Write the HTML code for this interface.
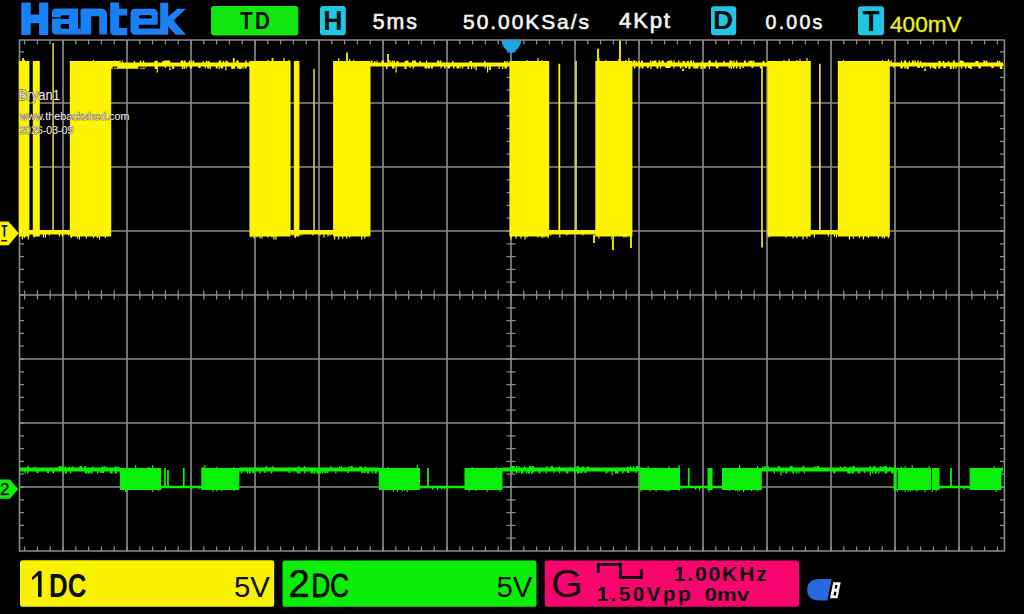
<!DOCTYPE html>
<html><head><meta charset="utf-8"><title>Hantek</title>
<style>
html,body{margin:0;padding:0;background:#000;width:1024px;height:614px;overflow:hidden}
svg{position:absolute;left:0;top:0;display:block}
text{font-family:"Liberation Sans",sans-serif}
</style></head><body>
<svg width="1024" height="614" viewBox="0 0 1024 614">
<rect width="1024" height="614" fill="#000"/>
<g fill="none" stroke="#8c8c8c" stroke-width="1.6">
<path d="M63 40V551 M127 40V551 M191 40V551 M255 40V551 M319 40V551 M383 40V551 M447 40V551 M511 40V551 M575 40V551 M639 40V551 M703 40V551 M767 40V551 M831 40V551 M895 40V551 M959 40V551 M19.5 103H1004.4 M19.5 167H1004.4 M19.5 231H1004.4 M19.5 295H1004.4 M19.5 359H1004.4 M19.5 423H1004.4 M19.5 487H1004.4"/>
<path d="M19.5 40H1004.4V551H19.5Z"/>
<path d="M24.6 40v4.5M24.6 551v-4.5M24.6 290.5v9 M37.4 40v4.5M37.4 551v-4.5M37.4 290.5v9 M50.2 40v4.5M50.2 551v-4.5M50.2 290.5v9 M63 40v4.5M63 551v-4.5M63 290.5v9 M75.8 40v4.5M75.8 551v-4.5M75.8 290.5v9 M88.6 40v4.5M88.6 551v-4.5M88.6 290.5v9 M101.4 40v4.5M101.4 551v-4.5M101.4 290.5v9 M114.2 40v4.5M114.2 551v-4.5M114.2 290.5v9 M127 40v4.5M127 551v-4.5M127 290.5v9 M139.8 40v4.5M139.8 551v-4.5M139.8 290.5v9 M152.6 40v4.5M152.6 551v-4.5M152.6 290.5v9 M165.4 40v4.5M165.4 551v-4.5M165.4 290.5v9 M178.2 40v4.5M178.2 551v-4.5M178.2 290.5v9 M191 40v4.5M191 551v-4.5M191 290.5v9 M203.8 40v4.5M203.8 551v-4.5M203.8 290.5v9 M216.6 40v4.5M216.6 551v-4.5M216.6 290.5v9 M229.4 40v4.5M229.4 551v-4.5M229.4 290.5v9 M242.2 40v4.5M242.2 551v-4.5M242.2 290.5v9 M255 40v4.5M255 551v-4.5M255 290.5v9 M267.8 40v4.5M267.8 551v-4.5M267.8 290.5v9 M280.6 40v4.5M280.6 551v-4.5M280.6 290.5v9 M293.4 40v4.5M293.4 551v-4.5M293.4 290.5v9 M306.2 40v4.5M306.2 551v-4.5M306.2 290.5v9 M319 40v4.5M319 551v-4.5M319 290.5v9 M331.8 40v4.5M331.8 551v-4.5M331.8 290.5v9 M344.6 40v4.5M344.6 551v-4.5M344.6 290.5v9 M357.4 40v4.5M357.4 551v-4.5M357.4 290.5v9 M370.2 40v4.5M370.2 551v-4.5M370.2 290.5v9 M383 40v4.5M383 551v-4.5M383 290.5v9 M395.8 40v4.5M395.8 551v-4.5M395.8 290.5v9 M408.6 40v4.5M408.6 551v-4.5M408.6 290.5v9 M421.4 40v4.5M421.4 551v-4.5M421.4 290.5v9 M434.2 40v4.5M434.2 551v-4.5M434.2 290.5v9 M447 40v4.5M447 551v-4.5M447 290.5v9 M459.8 40v4.5M459.8 551v-4.5M459.8 290.5v9 M472.6 40v4.5M472.6 551v-4.5M472.6 290.5v9 M485.4 40v4.5M485.4 551v-4.5M485.4 290.5v9 M498.2 40v4.5M498.2 551v-4.5M498.2 290.5v9 M511 40v4.5M511 551v-4.5M511 290.5v9 M523.8 40v4.5M523.8 551v-4.5M523.8 290.5v9 M536.6 40v4.5M536.6 551v-4.5M536.6 290.5v9 M549.4 40v4.5M549.4 551v-4.5M549.4 290.5v9 M562.2 40v4.5M562.2 551v-4.5M562.2 290.5v9 M575 40v4.5M575 551v-4.5M575 290.5v9 M587.8 40v4.5M587.8 551v-4.5M587.8 290.5v9 M600.6 40v4.5M600.6 551v-4.5M600.6 290.5v9 M613.4 40v4.5M613.4 551v-4.5M613.4 290.5v9 M626.2 40v4.5M626.2 551v-4.5M626.2 290.5v9 M639 40v4.5M639 551v-4.5M639 290.5v9 M651.8 40v4.5M651.8 551v-4.5M651.8 290.5v9 M664.6 40v4.5M664.6 551v-4.5M664.6 290.5v9 M677.4 40v4.5M677.4 551v-4.5M677.4 290.5v9 M690.2 40v4.5M690.2 551v-4.5M690.2 290.5v9 M703 40v4.5M703 551v-4.5M703 290.5v9 M715.8 40v4.5M715.8 551v-4.5M715.8 290.5v9 M728.6 40v4.5M728.6 551v-4.5M728.6 290.5v9 M741.4 40v4.5M741.4 551v-4.5M741.4 290.5v9 M754.2 40v4.5M754.2 551v-4.5M754.2 290.5v9 M767 40v4.5M767 551v-4.5M767 290.5v9 M779.8 40v4.5M779.8 551v-4.5M779.8 290.5v9 M792.6 40v4.5M792.6 551v-4.5M792.6 290.5v9 M805.4 40v4.5M805.4 551v-4.5M805.4 290.5v9 M818.2 40v4.5M818.2 551v-4.5M818.2 290.5v9 M831 40v4.5M831 551v-4.5M831 290.5v9 M843.8 40v4.5M843.8 551v-4.5M843.8 290.5v9 M856.6 40v4.5M856.6 551v-4.5M856.6 290.5v9 M869.4 40v4.5M869.4 551v-4.5M869.4 290.5v9 M882.2 40v4.5M882.2 551v-4.5M882.2 290.5v9 M895 40v4.5M895 551v-4.5M895 290.5v9 M907.8 40v4.5M907.8 551v-4.5M907.8 290.5v9 M920.6 40v4.5M920.6 551v-4.5M920.6 290.5v9 M933.4 40v4.5M933.4 551v-4.5M933.4 290.5v9 M946.2 40v4.5M946.2 551v-4.5M946.2 290.5v9 M959 40v4.5M959 551v-4.5M959 290.5v9 M971.8 40v4.5M971.8 551v-4.5M971.8 290.5v9 M984.6 40v4.5M984.6 551v-4.5M984.6 290.5v9 M997.4 40v4.5M997.4 551v-4.5M997.4 290.5v9 M19.5 51.8h4.5M1004.4 51.8h-4.5M506.5 51.8h9 M19.5 64.6h4.5M1004.4 64.6h-4.5M506.5 64.6h9 M19.5 77.4h4.5M1004.4 77.4h-4.5M506.5 77.4h9 M19.5 90.2h4.5M1004.4 90.2h-4.5M506.5 90.2h9 M19.5 103h4.5M1004.4 103h-4.5M506.5 103h9 M19.5 115.8h4.5M1004.4 115.8h-4.5M506.5 115.8h9 M19.5 128.6h4.5M1004.4 128.6h-4.5M506.5 128.6h9 M19.5 141.4h4.5M1004.4 141.4h-4.5M506.5 141.4h9 M19.5 154.2h4.5M1004.4 154.2h-4.5M506.5 154.2h9 M19.5 167h4.5M1004.4 167h-4.5M506.5 167h9 M19.5 179.8h4.5M1004.4 179.8h-4.5M506.5 179.8h9 M19.5 192.6h4.5M1004.4 192.6h-4.5M506.5 192.6h9 M19.5 205.4h4.5M1004.4 205.4h-4.5M506.5 205.4h9 M19.5 218.2h4.5M1004.4 218.2h-4.5M506.5 218.2h9 M19.5 231h4.5M1004.4 231h-4.5M506.5 231h9 M19.5 243.8h4.5M1004.4 243.8h-4.5M506.5 243.8h9 M19.5 256.6h4.5M1004.4 256.6h-4.5M506.5 256.6h9 M19.5 269.4h4.5M1004.4 269.4h-4.5M506.5 269.4h9 M19.5 282.2h4.5M1004.4 282.2h-4.5M506.5 282.2h9 M19.5 295h4.5M1004.4 295h-4.5M506.5 295h9 M19.5 307.8h4.5M1004.4 307.8h-4.5M506.5 307.8h9 M19.5 320.6h4.5M1004.4 320.6h-4.5M506.5 320.6h9 M19.5 333.4h4.5M1004.4 333.4h-4.5M506.5 333.4h9 M19.5 346.2h4.5M1004.4 346.2h-4.5M506.5 346.2h9 M19.5 359h4.5M1004.4 359h-4.5M506.5 359h9 M19.5 371.8h4.5M1004.4 371.8h-4.5M506.5 371.8h9 M19.5 384.6h4.5M1004.4 384.6h-4.5M506.5 384.6h9 M19.5 397.4h4.5M1004.4 397.4h-4.5M506.5 397.4h9 M19.5 410.2h4.5M1004.4 410.2h-4.5M506.5 410.2h9 M19.5 423h4.5M1004.4 423h-4.5M506.5 423h9 M19.5 435.8h4.5M1004.4 435.8h-4.5M506.5 435.8h9 M19.5 448.6h4.5M1004.4 448.6h-4.5M506.5 448.6h9 M19.5 461.4h4.5M1004.4 461.4h-4.5M506.5 461.4h9 M19.5 474.2h4.5M1004.4 474.2h-4.5M506.5 474.2h9 M19.5 487h4.5M1004.4 487h-4.5M506.5 487h9 M19.5 499.8h4.5M1004.4 499.8h-4.5M506.5 499.8h9 M19.5 512.6h4.5M1004.4 512.6h-4.5M506.5 512.6h9 M19.5 525.4h4.5M1004.4 525.4h-4.5M506.5 525.4h9 M19.5 538.2h4.5M1004.4 538.2h-4.5M506.5 538.2h9" stroke-width="1.3"/>
</g>
<path fill="#0af00a" d="M120 468H161.25V490H120Z M201.25 468H239.25V490H201.25Z M378.75 468H420V490H378.75Z M464.5 468H502.5V490H464.5Z M639.5 468H680V490H639.5Z M707.5 468H712.5V490H707.5Z M722 468H761.8V490H722Z M893.6 468H939.5V490H893.6Z M969.6 468H1001.6V490H969.6Z M20 467.5H120V471.5H20Z M239.25 467.5H378.75V471.5H239.25Z M502.5 467.5H639.5V471.5H502.5Z M761.8 467.5H893.6V471.5H761.8Z M1001.6 467.5H1003V471.5H1001.6Z M161.25 485.8H201.25V488.2H161.25Z M420 485.8H464.5V488.2H420Z M680 485.8H722V488.2H680Z M939.5 485.8H969.6V488.2H939.5Z M27.5 467.5v-1.5h1.5v1.5Z M34.5 467.5v-1h1.2v1Z M58.5 467.5v-1.5h2v1.5Z M60.5 467.5v-1h2.5v1Z M64.5 467.5v-1h1.5v1Z M68.5 467.5v-1h1.5v1Z M71.5 467.5v-1h2v1Z M79.5 467.5v-1.5h2.5v1.5Z M84.5 467.5v-1.5h1.5v1.5Z M92 467.5v-1h1.2v1Z M101.5 467.5v-1h1.5v1Z M103.5 467.5v-1.5h1.5v1.5Z M106 467.5v-1h1.2v1Z M114.5 467.5v-1h2.5v1Z M117.5 467.5v-1h1.5v1Z M24.5 471.5v2h1.2v-2Z M27 471.5v2h1.5v-2Z M36.5 471.5v1.5h2v-1.5Z M47 471.5v1.5h2v-1.5Z M52.5 471.5v2h1.5v-2Z M63 471.5v3h1.2v-3Z M65 471.5v2h2v-2Z M70 471.5v2h1.2v-2Z M85 471.5v2h2.5v-2Z M88 471.5v2h2.5v-2Z M91 471.5v2h1.5v-2Z M97 471.5v2h1.5v-2Z M100 471.5v1.5h1.5v-1.5Z M102 471.5v1.5h2v-1.5Z M110 471.5v2h2.5v-2Z M114.5 471.5v2h2.5v-2Z M265.75 467.5v-1.5h1.5v1.5Z M272.25 467.5v-1.5h1.2v1.5Z M298.25 467.5v-1.5h1.2v1.5Z M303.75 467.5v-1.5h1.5v1.5Z M330.25 467.5v-1.5h1.2v1.5Z M338.75 467.5v-1h1.2v1Z M340.75 467.5v-1.5h1.2v1.5Z M348.25 467.5v-1h2v1Z M350.75 467.5v-1.5h2v1.5Z M359.25 467.5v-1h2.5v1Z M364.75 467.5v-1h1.5v1Z M240.75 471.5v2h1.5v-2Z M246.75 471.5v2h1.2v-2Z M248.75 471.5v2h2v-2Z M252.25 471.5v1.5h2v-1.5Z M259.25 471.5v2h1.5v-2Z M264.25 471.5v1.5h1.5v-1.5Z M270.75 471.5v2h1.5v-2Z M288.75 471.5v1.5h1.5v-1.5Z M296.75 471.5v2h2v-2Z M299.25 471.5v2h1.5v-2Z M304.25 471.5v2h1.5v-2Z M310.75 471.5v2h2v-2Z M313.25 471.5v2h2v-2Z M316.25 471.5v2h2.5v-2Z M318.75 471.5v2h2.5v-2Z M321.75 471.5v2h1.2v-2Z M323.75 471.5v1.5h2.5v-1.5Z M326.75 471.5v1.5h1.5v-1.5Z M335.25 471.5v2h1.2v-2Z M347.25 471.5v1.5h1.5v-1.5Z M361.25 471.5v1.5h2v-1.5Z M363.75 471.5v1.5h2v-1.5Z M366.75 471.5v2h2.5v-2Z M371.75 471.5v2h1.5v-2Z M374.75 471.5v2h2v-2Z M511.5 467.5v-1.5h2v1.5Z M513.5 467.5v-1.5h1.2v1.5Z M516 467.5v-1.5h1.5v1.5Z M518.5 467.5v-1.5h1.2v1.5Z M524 467.5v-1.5h1.2v1.5Z M529 467.5v-1.5h2v1.5Z M531.5 467.5v-1.5h2.5v1.5Z M546 467.5v-1h2v1Z M550.5 467.5v-1.5h2.5v1.5Z M558.5 467.5v-1h1.5v1Z M569.5 467.5v-1h1.2v1Z M576.5 467.5v-1.5h2.5v1.5Z M581.5 467.5v-1h2.5v1Z M587 467.5v-1h2v1Z M627 467.5v-1h1.5v1Z M630 467.5v-1.5h1.2v1.5Z M633 467.5v-1.5h1.2v1.5Z M636 467.5v-1.5h2.5v1.5Z M511.5 471.5v2h1.2v-2Z M516 471.5v2h1.5v-2Z M518.5 471.5v1.5h1.2v-1.5Z M521 471.5v2h2.5v-2Z M526 471.5v2h1.5v-2Z M528 471.5v2h2v-2Z M531 471.5v2h2.5v-2Z M538.5 471.5v2h2v-2Z M545.5 471.5v2h1.2v-2Z M553.5 471.5v1.5h1.2v-1.5Z M559 471.5v2h1.2v-2Z M566 471.5v2h2.5v-2Z M574 471.5v2h1.5v-2Z M577 471.5v2h2.5v-2Z M580 471.5v1.5h2.5v-1.5Z M584.5 471.5v1.5h2v-1.5Z M605.5 471.5v2h2v-2Z M611.5 471.5v4h1.2v-4Z M615 471.5v2h2.5v-2Z M617 471.5v2h1.5v-2Z M622 471.5v2h1.5v-2Z M627 471.5v1.5h2.5v-1.5Z M635.5 471.5v1.5h1.2v-1.5Z M762.3 467.5v-1h1.2v1Z M764.3 467.5v-1.5h1.2v1.5Z M767.3 467.5v-1.5h1.5v1.5Z M777.8 467.5v-1.5h2v1.5Z M789.8 467.5v-1.5h2v1.5Z M791.8 467.5v-1h1.2v1Z M802.3 467.5v-1.5h2v1.5Z M813.8 467.5v-1h2v1Z M816.8 467.5v-1.5h2.5v1.5Z M839.8 467.5v-1h1.2v1Z M844.3 467.5v-1.5h1.2v1.5Z M849.8 467.5v-1h1.5v1Z M852.3 467.5v-1.5h2.5v1.5Z M869.3 467.5v-1.5h1.5v1.5Z M873.3 467.5v-1.5h2v1.5Z M879.8 467.5v-1.5h1.2v1.5Z M881.8 467.5v-1h2v1Z M884.3 467.5v-1.5h2.5v1.5Z M889.3 467.5v-1h1.5v1Z M773.8 471.5v2h1.2v-2Z M780.3 471.5v4h1.2v-4Z M782.3 471.5v1.5h1.2v-1.5Z M785.3 471.5v2h2v-2Z M792.3 471.5v2h2v-2Z M795.8 471.5v2h1.5v-2Z M798.3 471.5v2h1.2v-2Z M803.8 471.5v2h1.2v-2Z M833.3 471.5v2h2v-2Z M847.3 471.5v2h2.5v-2Z M849.3 471.5v2h2v-2Z M851.8 471.5v2h2v-2Z M857.8 471.5v2h2.5v-2Z M863.8 471.5v1.5h1.5v-1.5Z M869.8 471.5v4h1.2v-4Z M871.8 471.5v2h1.5v-2Z M874.8 471.5v2h2v-2Z M878.3 471.5v2h1.2v-2Z M884.8 471.5v2h2.5v-2Z M891.3 471.5v2h2v-2Z M125 490v2h1.2v-2Z M127 490v1.5h1.2v-1.5Z M135 468v-3h1.2v3Z M148 468v-1h1.2v1Z M152 490v2h1.2v-2Z M152 468v-3h1.2v3Z M158 490v1h1.2v-1Z M202.25 468v-1h1.2v1Z M204.25 468v-3h1.2v3Z M212.25 490v1.5h1.2v-1.5Z M216.25 490v1.5h1.2v-1.5Z M216.25 468v-1h1.2v1Z M221.25 490v1.5h1.2v-1.5Z M233.25 490v1h1.2v-1Z M233.25 468v-1h1.2v1Z M387.75 468v-1h1.2v1Z M392.75 490v1.5h1.2v-1.5Z M396.75 490v2h1.2v-2Z M401.75 490v1.5h1.2v-1.5Z M403.75 490v1h1.2v-1Z M406.75 490v2h1.2v-2Z M416.75 468v-3h1.2v3Z M468.5 490v1.5h1.2v-1.5Z M471.5 468v-1h1.2v1Z M475.5 490v1h1.2v-1Z M486.5 490v2h1.2v-2Z M495.5 468v-1h1.2v1Z M499.5 490v1.5h1.2v-1.5Z M640.5 490v1.5h1.2v-1.5Z M640.5 468v-1h1.2v1Z M647.5 468v-2h1.2v2Z M649.5 490v1.5h1.2v-1.5Z M655.5 490v1.5h1.2v-1.5Z M664.5 490v1h1.2v-1Z M666.5 490v1.5h1.2v-1.5Z M668.5 490v1.5h1.2v-1.5Z M668.5 468v-2h1.2v2Z M678.5 490v1h1.2v-1Z M678.5 468v-3h1.2v3Z M708.5 490v2h1.2v-2Z M729 490v1h1.2v-1Z M735 490v1h1.2v-1Z M737 490v1.5h1.2v-1.5Z M739 490v1h1.2v-1Z M739 468v-3h1.2v3Z M743 490v2h1.2v-2Z M751 490v1h1.2v-1Z M757 490v1h1.2v-1Z M757 468v-2h1.2v2Z M894.6 490v1h1.2v-1Z M894.6 468v-3h1.2v3Z M896.6 490v2h1.2v-2Z M900.6 468v-1h1.2v1Z M904.6 490v2h1.2v-2Z M904.6 468v-2h1.2v2Z M907.6 490v1.5h1.2v-1.5Z M909.6 490v1.5h1.2v-1.5Z M911.6 490v1h1.2v-1Z M911.6 468v-3h1.2v3Z M915.6 490v1.5h1.2v-1.5Z M917.6 490v1h1.2v-1Z M924.6 490v2h1.2v-2Z M928.6 468v-2h1.2v2Z M931.6 490v2h1.2v-2Z M935.6 490v1.5h1.2v-1.5Z M993.6 468v-2h1.2v2Z M995.6 490v2h1.2v-2Z M191.25 488.2v1h1.2v-1Z M198.25 488.2v1h1.2v-1Z M432 488.2v1.5h1.2v-1.5Z M437 488.2v2h1.2v-2Z M441 488.2v1h1.2v-1Z M444 488.2v1h1.2v-1Z M447 488.2v1.5h1.2v-1.5Z M681 488.2v1h1.2v-1Z M695 488.2v1.5h1.2v-1.5Z M699 488.2v2h1.2v-2Z M963.5 488.2v1.5h1.2v-1.5Z M164.1 468H165.9V486H164.1Z M167.1 470H168.9V486H167.1Z M182.85 468H184.65V486H182.85Z M427.1 468H428.9V486H427.1Z M687.85 468H689.65V486H687.85Z M950.1 468H951.9V486H950.1Z"/>
<path fill="#000" d="M931 468H932V490H931Z M896.8 470H897.8V489H896.8Z"/>
<path fill="#fcf400" d="M18.8 61H29.4V236.5H18.8Z M32.8 61H39.8V236.5H32.8Z M69.8 61H111.2V236.5H69.8Z M249.4 61H290.6V236.5H249.4Z M293.8 61H299.4V236.5H293.8Z M333.1 61H370.5V236.5H333.1Z M509.4 61H549.2V236.5H509.4Z M595.3 61H632.4V236.5H595.3Z M767.4 61H810.8V236.5H767.4Z M837.8 61H889.8V236.5H837.8Z M111.2 62.5H249.4V66.5H111.2Z M370.5 62.5H509.4V66.5H370.5Z M632.4 62.5H767.4V66.5H632.4Z M889.8 62.5H1003V66.5H889.8Z M29.4 230H32.8V234.5H29.4Z M39.8 230H69.8V234.5H39.8Z M290.6 230H293.8V234.5H290.6Z M299.4 230H333.1V234.5H299.4Z M549.2 230H595.3V234.5H549.2Z M810.8 230H837.8V234.5H810.8Z M111 66H145V68.7H111Z M111 61H119V63H111Z M114.2 62.5v-2h1.2v2Z M119.2 62.5v-2h1.5v2Z M121.7 62.5v-2h1.2v2Z M133.7 62.5v-1.5h1.5v1.5Z M139.7 62.5v-2h1.5v2Z M142.7 62.5v-2h1.5v2Z M154.2 62.5v-1.5h2.5v1.5Z M156.2 62.5v-2h1.5v2Z M162.2 62.5v-1.5h2.5v1.5Z M164.2 62.5v-2h2.5v2Z M166.2 62.5v-2h2.5v2Z M168.2 62.5v-2h2v2Z M180.7 62.5v-2h2.5v2Z M183.7 62.5v-2h2v2Z M188.7 62.5v-2h1.2v2Z M190.7 62.5v-2h1.5v2Z M192.7 62.5v-2h1.5v2Z M202.7 62.5v-1.5h1.2v1.5Z M205.7 62.5v-2h1.5v2Z M207.7 62.5v-1.5h2v1.5Z M218.7 62.5v-2h2.5v2Z M222.7 62.5v-1.5h1.5v1.5Z M225.2 62.5v-2h1.5v2Z M227.2 62.5v-1.5h1.2v1.5Z M233.2 62.5v-1.5h1.2v1.5Z M236.2 62.5v-2h2.5v2Z M245.2 62.5v-2h1.5v2Z M112.7 66.5v2h2v-2Z M115.2 66.5v1.5h2v-1.5Z M138.2 66.5v2h2.5v-2Z M141.2 66.5v1.5h2v-1.5Z M143.7 66.5v1.5h2v-1.5Z M154.7 66.5v2.5h2v-2.5Z M156.7 66.5v6h1.2v-6Z M164.7 66.5v1.5h1.2v-1.5Z M169.7 66.5v2h1.5v-2Z M172.2 66.5v2.5h2v-2.5Z M181.7 66.5v2.5h1.5v-2.5Z M183.7 66.5v2.5h1.2v-2.5Z M185.7 66.5v2h1.2v-2Z M189.7 66.5v2h2.5v-2Z M198.2 66.5v1.5h2.5v-1.5Z M204.7 66.5v2h1.2v-2Z M207.2 66.5v2h2v-2Z M209.7 66.5v2.5h1.2v-2.5Z M215.7 66.5v2h2v-2Z M218.7 66.5v2.5h1.2v-2.5Z M220.7 66.5v2h2.5v-2Z M225.2 66.5v4h1.2v-4Z M231.2 66.5v2.5h2.5v-2.5Z M233.2 66.5v2h2v-2Z M237.2 66.5v2h2v-2Z M239.2 66.5v2.5h2.5v-2.5Z M242.2 66.5v2h1.5v-2Z M244.7 66.5v2h2v-2Z M371 62.5v-2h1.5v2Z M374 62.5v-1.5h1.5v1.5Z M376.5 62.5v-2h1.2v2Z M381.5 62.5v-2h2.5v2Z M388.5 62.5v-2h2v2Z M391.5 62.5v-2h1.5v2Z M393.5 62.5v-2h1.5v2Z M396.5 62.5v-1.5h2v1.5Z M404.5 62.5v-1.5h2v1.5Z M406.5 62.5v-2h2v2Z M412 62.5v-2h2v2Z M414 62.5v-2h2v2Z M419.5 62.5v-1.5h1.5v1.5Z M426 62.5v-2h1.2v2Z M437 62.5v-2h2.5v2Z M440 62.5v-2h1.5v2Z M452 62.5v-1.5h1.5v1.5Z M469.5 62.5v-1.5h2.5v1.5Z M484 62.5v-1.5h1.5v1.5Z M504 62.5v-1.5h1.5v1.5Z M506.5 62.5v-1.5h1.2v1.5Z M386 66.5v2.5h1.5v-2.5Z M392 66.5v2h2.5v-2Z M395.5 66.5v6h1.2v-6Z M404.5 66.5v2.5h2v-2.5Z M409.5 66.5v1.5h1.2v-1.5Z M412.5 66.5v2h1.5v-2Z M424.5 66.5v2h2.5v-2Z M427.5 66.5v2h2.5v-2Z M431 66.5v2h2v-2Z M440.5 66.5v2h1.2v-2Z M444 66.5v2h1.5v-2Z M447.5 66.5v2h2.5v-2Z M453 66.5v2h1.5v-2Z M456.5 66.5v2h2.5v-2Z M459.5 66.5v2h1.2v-2Z M462 66.5v2h1.2v-2Z M467.5 66.5v2.5h1.5v-2.5Z M471 66.5v2.5h1.2v-2.5Z M473.5 66.5v2h1.2v-2Z M475.5 66.5v4h1.2v-4Z M484.5 66.5v2h1.2v-2Z M487 66.5v6h1.2v-6Z M498.5 66.5v2.5h1.2v-2.5Z M502 66.5v2.5h1.2v-2.5Z M504.5 66.5v2h2.5v-2Z M632.9 62.5v-2h2.5v2Z M635.9 62.5v-1.5h1.2v1.5Z M638.4 62.5v-1.5h1.5v1.5Z M640.9 62.5v-2h2v2Z M649.9 62.5v-2h1.5v2Z M651.9 62.5v-1.5h2.5v1.5Z M653.9 62.5v-2h2.5v2Z M658.4 62.5v-2h2v2Z M661.4 62.5v-2h2.5v2Z M666.9 62.5v-1.5h2.5v1.5Z M668.9 62.5v-2h2v2Z M670.9 62.5v-2h1.5v2Z M673.4 62.5v-2h1.2v2Z M677.9 62.5v-2h1.5v2Z M682.4 62.5v-1.5h2.5v1.5Z M686.9 62.5v-1.5h2v1.5Z M689.9 62.5v-2h2v2Z M692.9 62.5v-2h1.2v2Z M701.4 62.5v-1.5h1.2v1.5Z M708.4 62.5v-2h2.5v2Z M715.4 62.5v-2h1.5v2Z M723.4 62.5v-1.5h1.5v1.5Z M729.4 62.5v-2h2v2Z M731.4 62.5v-1.5h1.2v1.5Z M733.4 62.5v-2h1.2v2Z M735.9 62.5v-2h1.5v2Z M743.9 62.5v-2h2v2Z M748.4 62.5v-1.5h2.5v1.5Z M750.4 62.5v-2h1.5v2Z M752.4 62.5v-2h2v2Z M762.4 62.5v-1.5h2v1.5Z M633.9 66.5v2h1.5v-2Z M638.9 66.5v2h1.5v-2Z M641.4 66.5v2h2v-2Z M646.9 66.5v1.5h2v-1.5Z M650.4 66.5v2.5h1.2v-2.5Z M656.4 66.5v2h2v-2Z M659.9 66.5v2h1.2v-2Z M665.4 66.5v1.5h2.5v-1.5Z M667.9 66.5v1.5h2.5v-1.5Z M673.4 66.5v2h1.2v-2Z M679.9 66.5v2h1.5v-2Z M682.4 66.5v2.5h1.2v-2.5Z M684.9 66.5v1.5h2v-1.5Z M688.4 66.5v2.5h2v-2.5Z M693.4 66.5v2h2.5v-2Z M695.9 66.5v2h2.5v-2Z M700.4 66.5v2.5h2v-2.5Z M703.4 66.5v2h2.5v-2Z M708.9 66.5v2.5h1.2v-2.5Z M715.9 66.5v2h2.5v-2Z M728.4 66.5v1.5h1.5v-1.5Z M730.4 66.5v2.5h1.5v-2.5Z M732.9 66.5v2h1.5v-2Z M735.9 66.5v2h1.5v-2Z M739.4 66.5v2.5h1.5v-2.5Z M742.4 66.5v1.5h1.5v-1.5Z M751.4 66.5v1.5h2v-1.5Z M759.9 66.5v2h2v-2Z M890.3 62.5v-2h1.5v2Z M900.8 62.5v-2h1.2v2Z M903.8 62.5v-2h2.5v2Z M908.8 62.5v-1.5h1.2v1.5Z M911.8 62.5v-2h2v2Z M914.3 62.5v-2h1.5v2Z M917.3 62.5v-2h1.5v2Z M919.8 62.5v-1.5h1.5v1.5Z M938.3 62.5v-1.5h2.5v1.5Z M942.8 62.5v-1.5h1.5v1.5Z M947.8 62.5v-1.5h1.5v1.5Z M952.8 62.5v-2h2v2Z M959.8 62.5v-2h2.5v2Z M962.3 62.5v-1.5h1.5v1.5Z M975.3 62.5v-1.5h2v1.5Z M977.3 62.5v-1.5h1.2v1.5Z M983.3 62.5v-2h2v2Z M985.8 62.5v-2h1.5v2Z M996.8 62.5v-2h1.5v2Z M998.8 62.5v-1.5h1.5v1.5Z M893.3 66.5v1.5h1.2v-1.5Z M900.3 66.5v2h2.5v-2Z M904.3 66.5v2h2v-2Z M906.8 66.5v2.5h2v-2.5Z M917.3 66.5v1.5h2.5v-1.5Z M921.3 66.5v1.5h2v-1.5Z M924.3 66.5v2.5h1.2v-2.5Z M929.8 66.5v2h1.5v-2Z M932.3 66.5v1.5h2.5v-1.5Z M934.3 66.5v2.5h2v-2.5Z M938.3 66.5v2h2v-2Z M943.3 66.5v1.5h2.5v-1.5Z M949.8 66.5v2.5h2v-2.5Z M952.8 66.5v2.5h1.5v-2.5Z M955.3 66.5v2h1.5v-2Z M960.8 66.5v2h1.5v-2Z M964.8 66.5v2h1.5v-2Z M967.8 66.5v1.5h2.5v-1.5Z M969.8 66.5v2.5h2v-2.5Z M978.3 66.5v2h2.5v-2Z M991.3 66.5v1.5h2.5v-1.5Z M999.8 66.5v2.5h2.5v-2.5Z M21.8 236.5v3h1.2v-3Z M23.8 236.5v1.5h1.2v-1.5Z M23.8 61v-1h1.2v1Z M27.8 236.5v3h1.2v-3Z M33.8 236.5v1h1.2v-1Z M70.8 236.5v1.5h1.2v-1.5Z M76.8 236.5v2h1.2v-2Z M78.8 236.5v3h1.2v-3Z M85.8 236.5v2h1.2v-2Z M92.8 236.5v1.5h1.2v-1.5Z M92.8 61v-1h1.2v1Z M96.8 236.5v1.5h1.2v-1.5Z M98.8 236.5v3h1.2v-3Z M104.8 236.5v1.5h1.2v-1.5Z M250.4 236.5v1h1.2v-1Z M253.4 236.5v2h1.2v-2Z M256.4 236.5v1h1.2v-1Z M259.4 236.5v2h1.2v-2Z M261.4 236.5v2h1.2v-2Z M267.4 236.5v1h1.2v-1Z M267.4 61v-1h1.2v1Z M271.4 236.5v1h1.2v-1Z M273.4 236.5v3h1.2v-3Z M275.4 236.5v3h1.2v-3Z M283.4 61v-3h1.2v3Z M288.4 61v-1h1.2v1Z M294.8 236.5v1.5h1.2v-1.5Z M334.1 236.5v3h1.2v-3Z M338.1 236.5v3h1.2v-3Z M338.1 61v-3h1.2v3Z M342.1 236.5v2h1.2v-2Z M346.1 236.5v2h1.2v-2Z M349.1 236.5v1h1.2v-1Z M349.1 61v-2h1.2v2Z M353.1 61v-1h1.2v1Z M361.1 236.5v3h1.2v-3Z M364.1 236.5v2h1.2v-2Z M510.4 236.5v3h1.2v-3Z M515.4 236.5v2h1.2v-2Z M520.4 236.5v2h1.2v-2Z M524.4 236.5v3h1.2v-3Z M526.4 236.5v1h1.2v-1Z M526.4 61v-1h1.2v1Z M537.4 236.5v1h1.2v-1Z M537.4 61v-3h1.2v3Z M541.4 236.5v1.5h1.2v-1.5Z M541.4 61v-1h1.2v1Z M543.4 236.5v1h1.2v-1Z M547.4 236.5v1.5h1.2v-1.5Z M598.3 236.5v2h1.2v-2Z M598.3 61v-3h1.2v3Z M605.3 61v-1h1.2v1Z M611.3 236.5v3h1.2v-3Z M618.3 61v-2h1.2v2Z M623.3 236.5v1h1.2v-1Z M625.3 236.5v1h1.2v-1Z M625.3 61v-1h1.2v1Z M628.3 61v-3h1.2v3Z M768.4 236.5v1h1.2v-1Z M783.4 61v-1h1.2v1Z M785.4 236.5v1h1.2v-1Z M788.4 61v-2h1.2v2Z M792.4 236.5v2h1.2v-2Z M796.4 236.5v1.5h1.2v-1.5Z M796.4 61v-1h1.2v1Z M799.4 61v-2h1.2v2Z M802.4 236.5v3h1.2v-3Z M806.4 236.5v2h1.2v-2Z M806.4 61v-3h1.2v3Z M842.8 61v-1h1.2v1Z M848.8 236.5v3h1.2v-3Z M852.8 236.5v2h1.2v-2Z M858.8 236.5v1.5h1.2v-1.5Z M862.8 236.5v3h1.2v-3Z M867.8 236.5v1.5h1.2v-1.5Z M877.8 236.5v2h1.2v-2Z M881.8 236.5v1.5h1.2v-1.5Z M881.8 61v-1h1.2v1Z M883.8 236.5v2h1.2v-2Z M887.8 236.5v1.5h1.2v-1.5Z M887.8 61v-2h1.2v2Z M42.8 234.5v3h1.2v-3Z M44.8 234.5v3h1.2v-3Z M48.8 234.5v1h1.2v-1Z M58.8 234.5v2h1.2v-2Z M61.8 234.5v2h1.2v-2Z M67.8 234.5v1h1.2v-1Z M291.6 234.5v1h1.2v-1Z M300.4 234.5v1h1.2v-1Z M312.4 234.5v1h1.2v-1Z M319.4 234.5v1h1.2v-1Z M323.4 234.5v3h1.2v-3Z M327.4 234.5v2h1.2v-2Z M329.4 234.5v1h1.2v-1Z M550.2 234.5v1h1.2v-1Z M559.2 234.5v3h1.2v-3Z M566.2 234.5v1h1.2v-1Z M582.2 234.5v1h1.2v-1Z M813.8 234.5v3h1.2v-3Z M827.8 234.5v2h1.2v-2Z M833.8 234.5v2h1.2v-2Z M835.8 234.5v3h1.2v-3Z M22.1 58H23.9V61H22.1Z M558.4 63.75H560.2V235H558.4Z M271.6 58H273.4V62H271.6Z M346.1 52.5H347.9V62H346.1Z M387.1 54H388.9V62H387.1Z M232.85 58H234.65V62H232.85Z M597.1 48.75H598.9V62H597.1Z M619.1 40.5H620.9V62H619.1Z M612.1 235H613.9V250H612.1Z M630.1 235H631.9V248H630.1Z M593.1 235H594.9V243H593.1Z M169.1 66H170.9V70H169.1Z M489.1 66H490.9V70H489.1Z M682.1 66H683.9V71H682.1Z M924.1 66H925.9V71H924.1Z"/>
<path fill="#d8d050" d="M52.3 43H53.9V230H52.3Z M313.2 68.75H314.8V230H313.2Z M575.1 61H576.9V230H575.1Z M761.1 66.5H762.9V247.5H761.1Z M819 63.75H820.8V230H819Z"/>
<text transform="translate(18.66 99.60) scale(0.1303 0.1449)" font-size="100" font-weight="normal" fill="#ece2ec" stroke="#3a2a24" stroke-width="5.520" stroke-linejoin="round" paint-order="stroke">Bryan1</text>
<text transform="translate(19.70 119.50) scale(0.1073 0.1041)" font-size="100" font-weight="normal" fill="#ece2ec" stroke="#3a2a24" stroke-width="6.724" stroke-linejoin="round" paint-order="stroke">www.thebackshed.com</text>
<text transform="translate(19.17 134.20) scale(0.1062 0.1100)" font-size="100" font-weight="normal" fill="#ece2ec" stroke="#3a2a24" stroke-width="6.364" stroke-linejoin="round" paint-order="stroke">2026-03-09</text>
<path fill="#1ea2e6" d="M501.6 40H521.1Q521.6 47.5 511.4 53.6Q501.1 47.5 501.6 40Z"/>
<path fill="#fcf400" d="M0 221.6H8.5L18.8 233.2L8.5 245.2H0Z"/>
<path fill="#111" d="M1.5 225H7.4V226.8H5.3V236.7H3.6V226.8H1.5Z M1.2 240H7.2V241.6H1.2Z"/>
<path fill="#0af00a" d="M0 479.6H9.8L18.3 488.9L9.8 498.7H0Z"/>
<path fill="#1a80f6" fill-rule="evenodd" d="M21.3 2.5H30.7V14.5H39.1V2.5H48.3V35.1H39.1V23.3H30.7V35.1H21.3Z M56 8.4H78V34.6H56Q52 34.6 52 30.6V12.4Q52 8.4 56 8.4Z M62 15.3H69V19H62Q60.5 19 60.5 17.15Q60.5 15.3 62 15.3Z M62 24H69V28.7H62Q60.5 28.7 60.5 26.35Q60.5 24 62 24Z M52 17.3H61V18.5H52Z M77.9 28.6H80.6V34.6H77.9Z M80.5 34.6V10.9Q80.5 8.4 83 8.4H101Q107 8.4 107 14.4V34.6H99.3V16.2H91.1V34.6Z M110.2 2.5H119.2V8.7H127.2V15.5H119.2V27.9H127.2V35.3H114.2Q110.2 35.3 110.2 31.3Z M135.5 8.7H152.7Q157.7 8.7 157.7 13.7V24.8H138.8V28.5H160.2V34.7H135.5Q130.5 34.7 130.5 29.7V13.7Q130.5 8.7 135.5 8.7Z M141 14.9H150Q152.1 14.9 152.1 16.75Q152.1 18.6 150 18.6H141Q138.8 18.6 138.8 16.75Q138.8 14.9 141 14.9Z M160.2 2.8H168.2V16.5L177.5 8.7H186L173.5 20.5L186 34.7H175.6L168.2 26.5V34.7H160.2Z"/>
<rect x="211" y="6" width="87.3" height="29.6" rx="3" fill="#12e612"/>
<rect x="320" y="6.1" width="25.8" height="29.1" rx="3" fill="#20c6e4"/>
<rect x="711" y="6.2" width="25.2" height="29.1" rx="3" fill="#20c6e4"/>
<rect x="858" y="6.3" width="26" height="29" rx="3" fill="#20c6e4"/>
<rect x="20" y="560.2" width="254.2" height="46.6" rx="2.5" fill="#f8f200"/>
<rect x="282.5" y="560.4" width="254" height="46.4" rx="2.5" fill="#0aee0a"/>
<rect x="544.8" y="560.5" width="254.2" height="46.3" rx="2.5" fill="#f8046e"/>
<text transform="translate(372.75 28.70) scale(0.2130 0.2130)" font-size="100" font-weight="normal" fill="#f2f2f2" letter-spacing="9.010" stroke="#f2f2f2" stroke-width="3.000" stroke-linejoin="round">5ms</text>
<text transform="translate(463.06 29.30) scale(0.2096 0.2096)" font-size="100" font-weight="normal" fill="#f2f2f2" letter-spacing="9.288" stroke="#f2f2f2" stroke-width="3.000" stroke-linejoin="round">50.00KSa/s</text>
<text transform="translate(619.06 27.60) scale(0.2225 0.2225)" font-size="100" font-weight="normal" fill="#f2f2f2" letter-spacing="7.701" stroke="#f2f2f2" stroke-width="3.000" stroke-linejoin="round">4Kpt</text>
<text transform="translate(765.52 28.70) scale(0.1957 0.1957)" font-size="100" font-weight="normal" fill="#f2f2f2" letter-spacing="11.516" stroke="#f2f2f2" stroke-width="3.000" stroke-linejoin="round">0.00s</text>
<text transform="translate(889.95 31.70) scale(0.2257 0.2257)" font-size="100" font-weight="normal" fill="#f0f020" letter-spacing="0.250" stroke="#f0f020" stroke-width="1.500" stroke-linejoin="round">400mV</text>
<text transform="translate(239.99 28.80) scale(0.2069 0.2406)" font-size="100" font-weight="bold" fill="#0c0c0c" letter-spacing="11.199">TD</text>
<text transform="translate(323.13 30.20) scale(0.2672 0.2768)" font-size="100" font-weight="bold" fill="#0c0c0c">H</text>
<text transform="translate(713.05 29.40) scale(0.2787 0.2580)" font-size="100" font-weight="bold" fill="#0c0c0c">D</text>
<text transform="translate(862.42 31.10) scale(0.2797 0.2942)" font-size="100" font-weight="bold" fill="#0c0c0c">T</text>
<path fill="#0c0c0c" d="M38.5 571H41.6V597H38V575.6L32 580.2V577.3L37.5 572Z"/>
<text transform="translate(49.09 597.10) scale(0.2590 0.3229)" font-size="100" font-weight="bold" fill="#0c0c0c">DC</text>
<text transform="translate(233.92 597.40) scale(0.2941 0.2942)" font-size="100" font-weight="normal" fill="#0c0c0c">5V</text>
<text transform="translate(288.59 597.10) scale(0.3826 0.3843)" font-size="100" font-weight="normal" fill="#0c0c0c" stroke="#0c0c0c" stroke-width="1.500" stroke-linejoin="round">2</text>
<text transform="translate(311.52 597.10) scale(0.2606 0.3229)" font-size="100" font-weight="normal" fill="#0c0c0c" stroke="#0c0c0c" stroke-width="2.500" stroke-linejoin="round">DC</text>
<text transform="translate(496.42 597.40) scale(0.2949 0.3014)" font-size="100" font-weight="normal" fill="#0c0c0c">5V</text>
<text transform="translate(550.95 597.40) scale(0.4092 0.3814)" font-size="100" font-weight="normal" fill="#0c0c0c">G</text>
<text transform="translate(673.73 580.80) scale(0.2114 0.2114)" font-size="100" font-weight="bold" fill="#0c0c0c" letter-spacing="8.568">1.00KHz</text>
<text transform="translate(596.65 600.50) scale(0.2086 0.2086)" font-size="100" font-weight="bold" fill="#0c0c0c" letter-spacing="11.189">1.50Vpp</text>
<text transform="translate(704.40 600.80) scale(0.2241 0.1743)" font-size="100" font-weight="bold" fill="#0c0c0c">0mv</text>
<text transform="translate(-0.05 495.00) scale(0.1696 0.1629)" font-size="100" font-weight="normal" fill="#0a0a0a" stroke="#0a0a0a" stroke-width="2.000" stroke-linejoin="round">2</text>
<path fill="none" stroke="#0c0c0c" stroke-width="2.9" d="M598.35 572.7V564.4H620.35V577.55H641.35V569.3"/>
<path fill="#2a68e0" d="M820 579H831.6L827.4 600.5H820Q807.2 600.5 807.2 589.75Q807.2 579 820 579Z"/>
<path fill="#f4f4f4" fill-rule="evenodd" d="M833.2 582.3H840.7L837.5 598.2H830Z M835.3 585H837.6L836.9 588.6H834.6Z M834.2 591.8H836.5L835.8 595.4H833.5Z"/>
</svg>
</body></html>
